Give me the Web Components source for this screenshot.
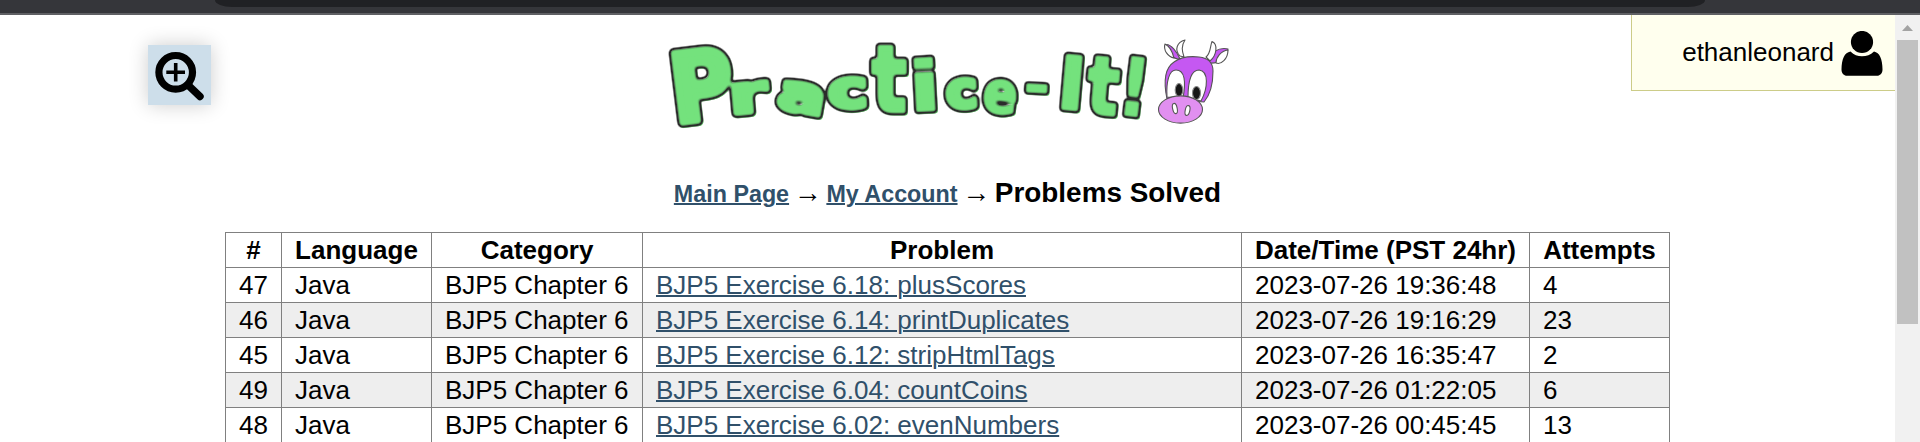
<!DOCTYPE html>
<html lang="en"><head><meta charset="utf-8"><title>Practice-It!</title>
<style>
html,body{margin:0;height:442px;overflow:hidden;background:#fff}
body{font-family:"Liberation Sans",Arial,sans-serif;font-size:26px;color:#000}
</style></head><body>
<practice-app></practice-app>
<script>
const define=(name,html,init)=>customElements.define(name,class extends HTMLElement{
  connectedCallback(){
    if(this.shadowRoot)return;
    const r=this.attachShadow({mode:'open'});
    r.innerHTML=html;
    if(init)init.call(this,r);
  }
});

define('browser-edge',`<style>
:host{display:block;box-sizing:border-box;height:15px;background:#35363a;border-bottom:2px solid #5f6064;overflow:hidden}
div{height:7px;margin:0 215px 0 215px;background:#202124;border-radius:0 0 22px 22px/0 0 9px 9px}
</style><div></div>`);

define('page-scrollbar',`<style>
:host{display:flex;flex-direction:column;align-items:center;width:25px;background:#f1f1f1}
svg{display:block;margin-top:10px;width:11px;height:6px}
i{display:block;width:21px;height:284px;margin-top:9px;background:#c1c1c1}
</style><svg viewBox="0 0 11 6"><path d="M0 6 5.5 0 11 6z" fill="#a3a3a3"/></svg><i></i>`);

define('zoom-button',`<style>
:host{display:block;width:63px;height:60px;background:#cddeea;box-shadow:0 0 20px rgba(0,0,0,.2)}
svg{display:block}
</style><svg width="63" height="60" viewBox="0 0 63 60" fill="none" stroke="#000">
<circle cx="27.7" cy="27.3" r="16.8" stroke-width="7.2"/><path d="M27.7 18v18.5M18.3 27.3h18.7" stroke-width="3.6"/>
<path d="M40 40 52 51.5" stroke-width="7.4" stroke-linecap="round"/></svg>`);

define('user-panel',`<style>
:host{display:flex;box-sizing:border-box;width:264px;height:76px;background:#ffffee;border:solid #cc8;border-width:0 0 1px 1px;justify-content:flex-end;padding:16px 12px 0 0;gap:7px}
span{line-height:30px;padding-top:6px}
svg{display:block;width:42px;height:46px}
</style><span><slot></slot></span><svg viewBox="0 0 42 46"><circle cx="21" cy="11" r="11.1"/>
<path d="M9.5 20.5C13 24 16.500 25.300 21 25.300S29.500 24 33 20.500C38.500 21.500 41.500 28 41.500 38.500 41.500 42.500 39 44.800 35.500 44.800H6.500C3 44.800.500 42.500.500 38.500.500 28 3.500 21.500 9.500 20.500z"/></svg>`);

define('practice-logo',`<style>
:host{display:block;width:570px;height:96px}
svg{display:block;overflow:visible}
text{fill:#74e27d;stroke:#74e27d;stroke-linejoin:round}
</style><svg width="570" height="96" viewBox="663 35 570 96">
<defs><filter id="ink" filterUnits="userSpaceOnUse" x="655" y="30" width="580" height="105" color-interpolation-filters="sRGB">
<feGaussianBlur in="SourceAlpha" stdDeviation="1.4" result="b"/>
<feComponentTransfer in="b" result="outer"><feFuncA type="linear" slope="3.2" intercept="-.4"/></feComponentTransfer>
<feComponentTransfer in="b" result="inner"><feFuncA type="linear" slope="3.2" intercept="-2.15"/></feComponentTransfer>
<feComposite in="outer" in2="inner" operator="out" result="ring"/>
<feFlood flood-color="#2b2b2b"/><feComposite in2="ring" operator="in" result="line"/>
<feOffset in="SourceGraphic" dx="1" dy="1" result="fill"/>
<feMerge><feMergeNode in="fill"/><feMergeNode in="line"/></feMerge></filter></defs>
<g id="letters" filter="url(#ink)"></g>
<g stroke="#555" stroke-width="1.1" stroke-linejoin="round">
<path fill="#c558f2" d="M1180 59C1177 52 1171 44 1166 44.500 1164 50 1169 57 1178 59zM1206 63C1210 52 1219 47 1228 49 1227 58 1219 64 1209 63z"/>
<path fill="#fff" d="M1165 44C1169 46 1172 50 1174 58 1168 57 1163 50 1165 44zM1180 56C1174 50 1177 42 1185 40 1181 46 1182 51 1184 57zM1206 57C1211 53 1210 46 1212 41.500 1218 44 1217 55 1210 61zM1216 63C1216 57 1221 51 1228 50 1228 59 1221 65 1216 63z"/>
<path fill="#c558f2" d="M1167 99C1163 80 1165 68 1174 62 1181 57 1190 56 1199 57 1208 58 1213 63 1213 71 1213 84 1210 95 1204 102z"/>
<path fill="#fff" d="M1167 97C1166 82 1169 70 1176 70 1185 70 1186 82 1183 98zM1188 98C1188 79 1192 70 1199 70 1209 71 1208 88 1201 101z"/>
<ellipse cx="1179" cy="90" rx="3.800" ry="6.500" fill="#161616" stroke="#888"/><ellipse cx="1196.500" cy="93" rx="4" ry="6.500" fill="#161616" stroke="#888"/>
<ellipse cx="1180.500" cy="109.500" rx="22" ry="13.600" fill="#e18ff0"/>
<ellipse cx="1175" cy="108.500" rx="2.300" ry="5.200" fill="#fff" transform="rotate(-12 1175 109)"/><ellipse cx="1187.500" cy="110.500" rx="2.300" ry="5" fill="#fff" transform="rotate(12 1187.500 110.500)"/>
</g></svg>`,function(r){
  // character, left, top, right, bottom, tilt in degrees, stroke width
  const letters=[['P',673,45,735,125,-7,9],['r',732,79,771,116,-5,7],['a',777,79,824,116,10,6],['c',827,74,867,112,-2,8],['t',869,44,909,114,0,7],['i',914,56,935,113,-3,4],['c',944,75,978,112,-3,8],['e',982,77,1018,116,6,5],['-',1025,82,1049,94,3,4],['I',1062,53,1082,112,5,7],['t',1085,55,1121,117,5,6],['!',1126,55,1143,118,7,4]];
  const g=r.getElementById('letters'),ctx=document.createElement('canvas').getContext('2d');
  ctx.font='bold 100px "DejaVu Sans"';
  for(const [ch,x0,y0,x1,y1,rot,sw] of letters){
    const m=ctx.measureText(ch),w=m.actualBoundingBoxRight+m.actualBoundingBoxLeft,h=m.actualBoundingBoxAscent+m.actualBoundingBoxDescent;
    const sy=(y1-y0-sw)/h,sx=(x1-x0-sw)/w,cx=(x0+x1)/2,cy=(y0+y1)/2;
    const t=document.createElementNS('http://www.w3.org/2000/svg','text');
    t.textContent=ch;
    t.setAttribute('font-family','DejaVu Sans, sans-serif');
    t.setAttribute('font-weight','bold');t.setAttribute('font-size',100*sy);
    t.setAttribute('stroke-width',sw);
    t.setAttribute('transform',`translate(${cx} ${cy}) rotate(${rot}) scale(${sx/sy} 1) translate(${-(m.actualBoundingBoxRight-m.actualBoundingBoxLeft)/2*sy} ${(m.actualBoundingBoxAscent-m.actualBoundingBoxDescent)/2*sy})`);
    g.append(t);
  }
});

define('bread-crumbs',`<style>
:host{display:flex;justify-content:center;align-items:baseline;font-size:23.3px;font-weight:bold;line-height:36px;gap:7px}
a{color:#30506a;text-decoration:underline;text-decoration-thickness:2px}
span{display:flex;justify-content:center;width:23.3px;font-family:"Liberation Serif",serif;font-size:28px;font-weight:normal}
strong{font-size:27.9px}
</style><a>Main Page</a><span>→</span><a>My Account</a><span>→</span><strong>Problems Solved</strong>`);

define('solved-table',`<style>
:host{display:block;width:1445px}
table{border-collapse:collapse;table-layout:fixed;width:1445px}
th,td{border:1px solid #808080;box-sizing:border-box;height:35px;padding:0 13px;line-height:34px;white-space:nowrap;text-align:left}
th{text-align:center;padding:0}
tbody tr:nth-child(even){background:#eee}
a{color:#30506a;text-decoration:underline;text-decoration-thickness:2px}
</style><table><colgroup><col style="width:56px"><col style="width:150px"><col style="width:211px"><col style="width:599px"><col style="width:288px"><col style="width:140px"></colgroup>
<thead><tr><th>#</th><th>Language</th><th>Category</th><th>Problem</th><th>Date/Time (PST 24hr)</th><th>Attempts</th></tr></thead><tbody></tbody></table>`,function(r){
  const rows=[[47,'6.18: plusScores','2023-07-26 19:36:48',4],[46,'6.14: printDuplicates','2023-07-26 19:16:29',23],[45,'6.12: stripHtmlTags','2023-07-26 16:35:47',2],[49,'6.04: countCoins','2023-07-26 01:22:05',6],[48,'6.02: evenNumbers','2023-07-26 00:45:45',13]];
  r.querySelector('tbody').innerHTML=rows.map(([n,p,d,a])=>`<tr><td>${n}</td><td>Java</td><td>BJP5 Chapter 6</td><td><a>BJP5 Exercise ${p}</a></td><td>${d}</td><td>${a}</td></tr>`).join('');
});

define('practice-app',`<style>
:host{display:flex;flex-direction:column;height:442px;overflow:hidden}
.body{display:flex;flex:1;min-height:0}
main{flex:1;min-width:0;overflow:hidden}
header{display:grid;grid-template-columns:663px 570px 1fr;height:160px;align-items:start}
zoom-button{margin:30px 0 0 148px}
practice-logo{margin-top:20px}
user-panel{justify-self:end}
bread-crumbs{height:36px}
solved-table{margin:21px auto 0}
</style><browser-edge></browser-edge><div class="body"><main>
<header><zoom-button></zoom-button><practice-logo></practice-logo><user-panel>ethanleonard</user-panel></header>
<bread-crumbs></bread-crumbs><solved-table></solved-table></main><page-scrollbar></page-scrollbar></div>`);
</script></body></html>
